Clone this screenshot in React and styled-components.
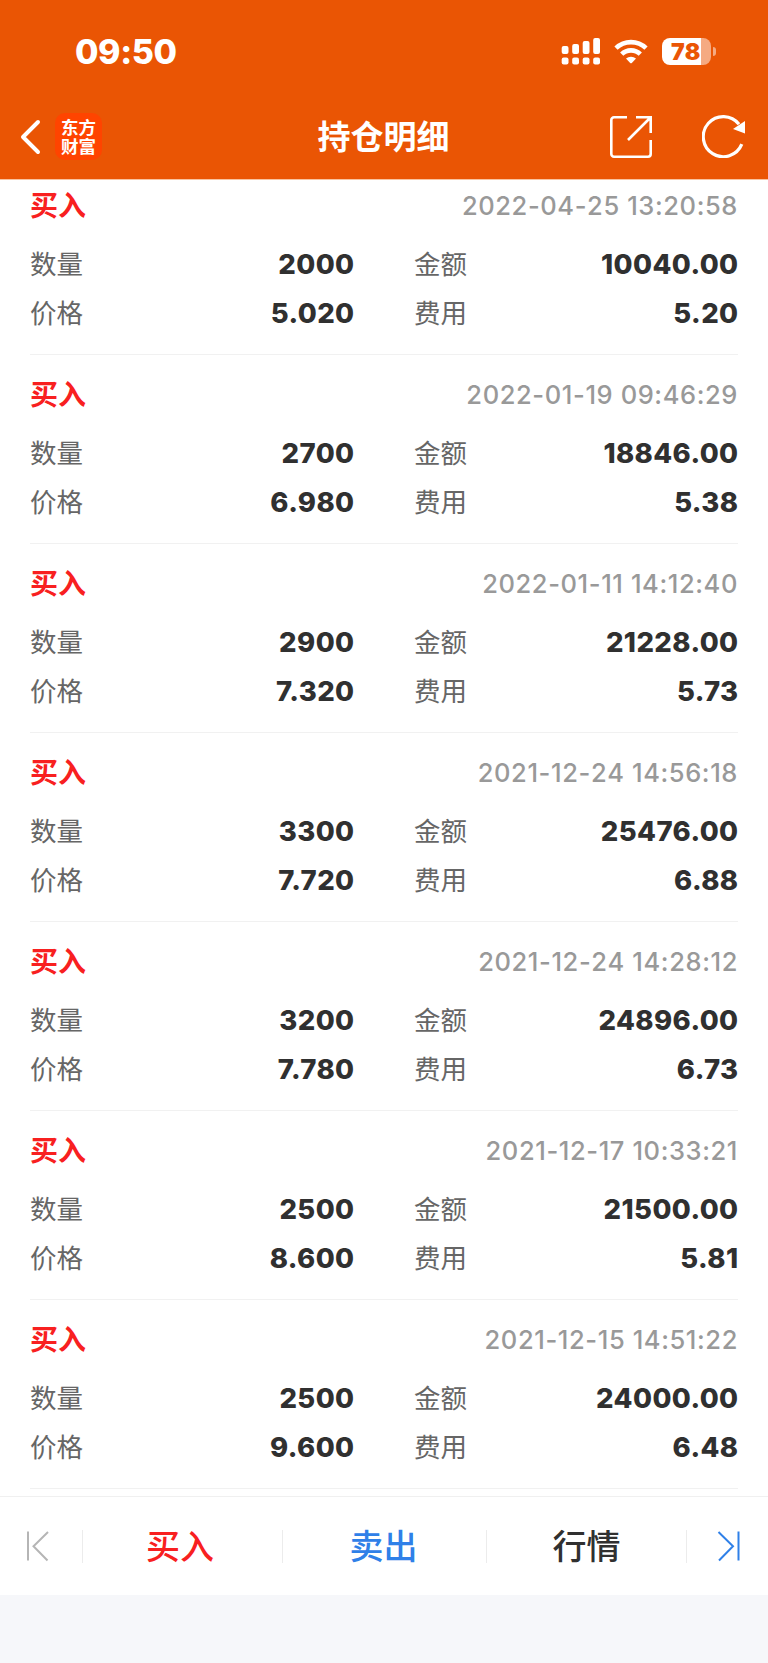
import React from "react";
import styled, { createGlobalStyle } from "styled-components";

const GlobalStyle = createGlobalStyle`
  * {
    box-sizing: border-box;
  }
  body {
    margin: 0;
    background-color: #f6f7fa;
    font-family: Inter, "Noto Sans CJK SC", sans-serif;
  }
`;

const Page = styled.main`
  display: flex;
  flex-direction: column;
  width: 768px;
  height: 1663px;
  overflow: hidden;
`;

const Header = styled.header`
  height: 180px;
  flex-shrink: 0;
  border-bottom: 1px solid #f9c3a0;
  background-color: #ea5504;
  color: #fff;
`;

const StatusBar = styled.div`
  display: flex;
  align-items: center;
  justify-content: space-between;
  height: 102px;
  padding: 0 52px 0 75px;
`;

const Time = styled.span`
  padding-top: 1px;
  font-size: 34px;
  font-weight: 800;
  line-height: 40px;
  letter-spacing: -0.4px;
`;

const StatusIcons = styled.div`
  display: flex;
  align-items: center;
`;

const Battery = styled.div`
  display: flex;
  align-items: center;
  gap: 2px;
  margin-left: 14px;
`;

const BatteryBody = styled.div`
  width: 49px;
  height: 27px;
  border-radius: 8px;
  padding: 1px 0 0 9px;
  background: linear-gradient(to right, #fff 39px, #f5aa82 39px);
  color: #ea5504;
  font-size: 23px;
  font-weight: 900;
  line-height: 27px;
  letter-spacing: 0.3px;
`;

const BatteryCap = styled.div`
  width: 3px;
  height: 9px;
  border-radius: 0 3px 3px 0;
  background-color: #f5aa82;
`;

const NavBar = styled.nav`
  display: grid;
  grid-template-columns: 1fr auto 1fr;
  align-items: center;
  height: 69px;
  padding: 0 22px 0 20px;
`;

const NavLeft = styled.div`
  display: flex;
  align-items: center;
  gap: 14px;
`;

const NavRight = styled.div`
  display: flex;
  align-items: center;
  justify-content: flex-end;
  gap: 50px;
`;

const Logo = styled.div`
  display: grid;
  align-content: center;
  width: 47px;
  height: 47px;
  padding-bottom: 2px;
  border-radius: 10px;
  background-color: #ff4400;
  font-family: "Noto Sans CJK SC", sans-serif;
  font-size: 17.5px;
  font-weight: 700;
  text-align: center;
`;

const LogoLine = styled.span`
  height: 19px;
  line-height: 19px;
`;

const Title = styled.h1`
  margin: 0;
  padding-left: 1px;
  font-size: 33px;
  font-weight: 700;
  line-height: 48px;
`;

const List = styled.ul`
  display: flex;
  flex-direction: column;
  justify-content: flex-end;
  height: 1316px;
  flex-shrink: 0;
  margin: 0;
  padding: 0 30px 7px;
  overflow: hidden;
  background-color: #fff;
  list-style: none;
`;

const Record = styled.li`
  height: 189px;
  flex-shrink: 0;
  padding-top: 19px;
  border-bottom: 1px solid #f1f1f1;
`;

const RecordHead = styled.div`
  display: flex;
  align-items: center;
  justify-content: space-between;
  height: 42px;
  margin-bottom: 13px;
`;

const Side = styled.span`
  color: #f82020;
  font-size: 28px;
  font-weight: 700;
  line-height: 42px;
`;

const DateText = styled.time`
  padding-bottom: 1px;
  color: #999;
  font-size: 25.5px;
  font-weight: 500;
  font-kerning: none;
  line-height: 40px;
  letter-spacing: 0.6px;
`;

const Fields = styled.dl`
  display: grid;
  grid-template-columns: 324px 324px;
  column-gap: 60px;
  grid-auto-rows: 49px;
  margin: 0;
`;

const Field = styled.div`
  display: flex;
  align-items: center;
  justify-content: space-between;
`;

const Label = styled.dt`
  color: #666;
  font-size: 26.5px;
  line-height: 49px;
`;

const Value = styled.dd`
  margin: 0 -0.5px 0 0;
  color: #303030;
  font-size: 27.5px;
  font-weight: 800;
  line-height: 49px;
  letter-spacing: 0.4px;
`;

const ActionBar = styled.footer`
  display: flex;
  align-items: center;
  height: 99px;
  flex-shrink: 0;
  border-top: 1px solid #f0f0f0;
  background-color: #fff;
`;

const Step = styled.button`
  display: flex;
  width: ${({ $width }) => $width}px;
  height: 33px;
  padding: 0 0 0 ${({ $inset }) => $inset}px;
  align-items: center;
  border: none;
  background: none;
`;

const Actions = styled.div`
  display: grid;
  flex: 1;
  grid-template-columns: 200px 204px 1fr;
  border-right: 1px solid #ececec;
`;

const Action = styled.button`
  height: 33px;
  padding: 0 ${({ $trim }) => $trim || 0}px 0 0;
  border: none;
  border-left: 1px solid #ececec;
  background: none;
  color: ${({ $color }) => $color};
  font-family: inherit;
  font-size: 34px;
  font-weight: 500;
  line-height: 33px;
`;

const records = [
  { date: "2022-04-25 13:20:58", count: "2000", amount: "10040.00", price: "5.020", fee: "5.20" },
  { date: "2022-01-19 09:46:29", count: "2700", amount: "18846.00", price: "6.980", fee: "5.38" },
  { date: "2022-01-11 14:12:40", count: "2900", amount: "21228.00", price: "7.320", fee: "5.73" },
  { date: "2021-12-24 14:56:18", count: "3300", amount: "25476.00", price: "7.720", fee: "6.88" },
  { date: "2021-12-24 14:28:12", count: "3200", amount: "24896.00", price: "7.780", fee: "6.73" },
  { date: "2021-12-17 10:33:21", count: "2500", amount: "21500.00", price: "8.600", fee: "5.81" },
  { date: "2021-12-15 14:51:22", count: "2500", amount: "24000.00", price: "9.600", fee: "6.48" },
];

const SignalIcon = () => (
  <svg width="39" height="28" viewBox="0 0 39 28" fill="#fff">
    <rect x="0.7" y="9" width="6.8" height="8" rx="2" />
    <rect x="11.2" y="7" width="6.8" height="10" rx="2" />
    <rect x="21.7" y="4" width="6.8" height="13" rx="2" />
    <rect x="32.2" y="1" width="6.8" height="16" rx="2" />
    <rect x="0.7" y="20.5" width="6.8" height="7" rx="2" />
    <rect x="11.2" y="20.5" width="6.8" height="7" rx="2" />
    <rect x="21.7" y="20.5" width="6.8" height="7" rx="2" />
    <rect x="32.2" y="20.5" width="6.8" height="7" rx="2" />
  </svg>
);

const Wifi = styled.svg`
  margin-left: 14px;
`;

const WifiIcon = () => (
  <Wifi width="34" height="25" viewBox="0 0 34 25">
    <g fill="none" stroke="#fff" strokeWidth="4.6">
      <path d="M2 9.2a21.5 21.5 0 0 1 30 0" />
      <path d="M7.7 15.2a13.2 13.2 0 0 1 18.6 0" />
    </g>
    <path d="M12 19.6a7.4 7.4 0 0 1 10 0L17.8 24q-.8.7-1.6 0z" fill="#fff" />
  </Wifi>
);

const BackIcon = () => (
  <svg width="21" height="36" viewBox="0 0 21 36" fill="none" stroke="#fff" strokeWidth="4">
    <path d="M18 3 3 18 18 33" strokeLinecap="round" strokeLinejoin="round" />
  </svg>
);

const ShareIcon = () => (
  <svg width="42" height="42" viewBox="0 0 42 42" fill="none" stroke="#fff" strokeWidth="2.6">
    <path d="M17 1.3H4A2.7 2.7 0 0 0 1.3 4v34A2.7 2.7 0 0 0 4 40.7h34a2.7 2.7 0 0 0 2.7-2.7V24" />
    <path d="M26 1.3h14.7V17M40 2 18 24" />
  </svg>
);

const RefreshIcon = () => (
  <svg width="44" height="43" viewBox="0 0 44 43">
    <path d="M39.8 29.2A20 20 0 1 1 37 9.3" fill="none" stroke="#fff" strokeWidth="3.2" />
    <path d="M43 6v12.5L31 14z" fill="#fff" />
  </svg>
);

const FirstIcon = () => (
  <svg width="23" height="32" viewBox="0 0 23 32" fill="none" stroke="#b5b5b5" strokeWidth="2">
    <path d="M2 1.5v29M22 2 7.5 16.3 21.5 30.5" />
  </svg>
);

const LastIcon = () => (
  <svg width="23" height="32" viewBox="0 0 23 32" fill="none" stroke="#2f80e8" strokeWidth="2">
    <path d="M21.5 1.5v29M1.5 2 16 16.3 2 30.5" />
  </svg>
);

const RecordItem = ({ record }) => {
  return (
    <Record>
      <RecordHead>
        <Side>买入</Side>
        <DateText>{record.date}</DateText>
      </RecordHead>
      <Fields>
        <Field>
          <Label>数量</Label>
          <Value>{record.count}</Value>
        </Field>
        <Field>
          <Label>金额</Label>
          <Value>{record.amount}</Value>
        </Field>
        <Field>
          <Label>价格</Label>
          <Value>{record.price}</Value>
        </Field>
        <Field>
          <Label>费用</Label>
          <Value>{record.fee}</Value>
        </Field>
      </Fields>
    </Record>
  );
};

const App = () => {
  return (
    <Page>
      <GlobalStyle />
      <Header>
        <StatusBar>
          <Time>09:50</Time>
          <StatusIcons>
            <SignalIcon />
            <WifiIcon />
            <Battery>
              <BatteryBody>78</BatteryBody>
              <BatteryCap />
            </Battery>
          </StatusIcons>
        </StatusBar>
        <NavBar>
          <NavLeft>
            <BackIcon />
            <Logo>
              <LogoLine>东方</LogoLine>
              <LogoLine>财富</LogoLine>
            </Logo>
          </NavLeft>
          <Title>持仓明细</Title>
          <NavRight>
            <ShareIcon />
            <RefreshIcon />
          </NavRight>
        </NavBar>
      </Header>
      <List>
        {records.map((record) => (
          <RecordItem key={record.date} record={record} />
        ))}
      </List>
      <ActionBar>
        <Step type="button" $width={82} $inset={26}>
          <FirstIcon />
        </Step>
        <Actions>
          <Action type="button" $color="#f82020" $trim={5}>买入</Action>
          <Action type="button" $color="#2f80e8" $trim={2}>卖出</Action>
          <Action type="button" $color="#303030">行情</Action>
        </Actions>
        <Step type="button" $width={81} $inset={30}>
          <LastIcon />
        </Step>
      </ActionBar>
    </Page>
  );
};

export default App;
